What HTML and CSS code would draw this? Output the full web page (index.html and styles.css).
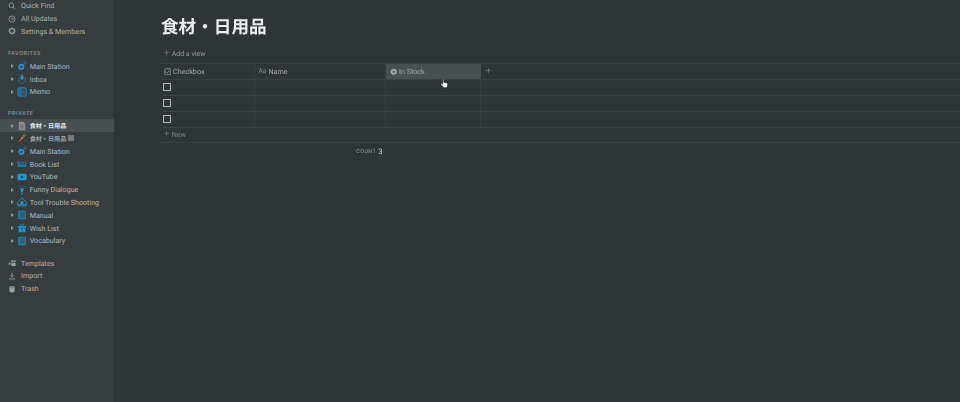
FILE: index.html
```html
<!DOCTYPE html>
<html lang="ja">
<head>
<meta charset="utf-8">
<title>食材・日用品</title>
<link rel="stylesheet" href="styles.css">
</head>
<body>
<div class="app">
  <aside class="sidebar">
    <nav class="group group-top">
      <div class="row tool"><svg class="ticon" viewBox="0 0 10 10"><circle cx="4.2" cy="4.2" r="2.9" class="ln"/><path d="M6.4 6.4 9 9" class="ln"/></svg><span>Quick Find</span></div>
      <div class="row tool"><svg class="ticon" viewBox="0 0 10 10"><circle cx="5" cy="5" r="3.9" class="ln"/><path d="M5 2.8V5.3H7.2" class="ln"/></svg><span>All Updates</span></div>
      <div class="row tool"><svg class="ticon" viewBox="0 0 10 10"><circle cx="5" cy="5" r="2.9" class="ln thick"/><path d="M5 .6v1.6M5 7.8v1.6M.6 5h1.6M7.8 5h1.6M1.9 1.9 3 3M7 7l1.1 1.1M8.1 1.9 7 3M3 7 1.9 8.1" class="ln thick"/></svg><span>Settings &amp; Members</span></div>
    </nav>
    <h2 class="heading">FAVORITES</h2>
    <nav class="group">
      <div class="row page"><i class="caret"></i><svg class="picon" viewBox="0 0 11 11"><circle cx="4.8" cy="6.4" r="3.4" fill="#2a8fc4"/><circle cx="4.8" cy="6.4" r="1.3" fill="#373c3f"/><circle cx="9" cy="2" r="1.3" fill="none" stroke="#2a8fc4" stroke-width=".7"/></svg><span>Main Station</span></div>
      <div class="row page"><i class="caret"></i><svg class="picon" viewBox="0 0 11 11"><circle cx="5.5" cy="6.5" r="3.7" fill="none" stroke="#2a8fc4" stroke-width="1.1" stroke-dasharray="1.3 .7"/><path d="M4.4 .8h2.2v3.2h1.5L5.5 6.8 2.9 4h1.5z" fill="#2a8fc4"/></svg><span>Inbox</span></div>
      <div class="row page"><i class="caret"></i><svg class="picon" viewBox="0 0 11 11"><rect x="1" y="1" width="9" height="9" rx="1" fill="none" stroke="#2a8fc4" stroke-width="1.1"/><rect x="1" y="1" width="5" height="9" fill="#1f6f99"/><path d="M7.6 3.5v4" stroke="#2a8fc4" stroke-width="1"/></svg><span>Memo</span></div>
    </nav>
    <h2 class="heading heading-private">PRIVATE</h2>
    <nav class="group">
      <div class="row page current"><i class="caret"></i><svg class="picon" viewBox="0 0 11 11"><path d="M2 .8h4.8L9 3v7.2H2z" fill="#8b8f91"/><path d="M3.5 4.5h4M3.5 6h4M3.5 7.5h4" stroke="#5a5f62" stroke-width=".6"/></svg><span class="cjk">食材・日用品</span></div>
      <div class="row page"><i class="caret"></i><svg class="picon" viewBox="0 0 11 11"><path d="M1 10.4 6 3.6 7.6 5.2z" fill="#e07b2a"/><path d="M6.6 3.6 8.6.6M7.2 4.2 10 2.4" stroke="#5fa33a" stroke-width="1.1"/></svg><span class="cjk">食材・日用品<b class="tag"></b></span></div>
      <div class="row page"><i class="caret"></i><svg class="picon" viewBox="0 0 11 11"><circle cx="4.8" cy="6.4" r="3.4" fill="#2a8fc4"/><circle cx="4.8" cy="6.4" r="1.3" fill="#373c3f"/><circle cx="9" cy="2" r="1.3" fill="none" stroke="#2a8fc4" stroke-width=".7"/></svg><span>Main Station</span></div>
      <div class="row page"><i class="caret"></i><svg class="picon" viewBox="0 0 11 11"><path d="M.6 2.4h9.8v6.2H.6z" fill="#1f7fb0"/><path d="M1.8 2.4h7.4v4H1.8z" fill="#373c3f"/><path d="M3 3v3M4.5 3v3M6 3v3M7.5 3v3" stroke="#2a8fc4" stroke-width=".6"/></svg><span>Book List</span></div>
      <div class="row page"><i class="caret"></i><svg class="picon" viewBox="0 0 11 11"><rect x=".4" y="1.8" width="10.2" height="7.4" rx="1.8" fill="#159bd8"/><path d="M4.5 3.9 7.2 5.5 4.5 7.1z" fill="#26292b"/></svg><span>YouTube</span></div>
      <div class="row page"><i class="caret"></i><svg class="picon" viewBox="0 0 11 11"><path d="M3.4 3.6h4.2L6.4 7.6H4.6z" fill="#2a8fc4"/><path d="M4.6 8.2h1.8v2H4.6z" fill="#2a8fc4"/><path d="M5.5.4v2M2 1.2l1.2 1.6M9 1.2 7.8 2.8" stroke="#2a8fc4" stroke-width=".6"/></svg><span>Funny Dialogue</span></div>
      <div class="row page"><i class="caret"></i><svg class="picon" viewBox="0 0 11 11"><path d="M5.5.8 10.2 6v3.8H.8V6z" fill="none" stroke="#2a8fc4" stroke-width="1"/><circle cx="5.5" cy="6.2" r="1.7" fill="#2a8fc4"/><path d="M1 8.5h9" stroke="#2a8fc4" stroke-width="1.2"/></svg><span>Tool Trouble Shooting</span></div>
      <div class="row page"><i class="caret"></i><svg class="picon" viewBox="0 0 11 11"><rect x="1.2" y=".8" width="8.6" height="9.4" rx=".6" fill="#1f7fb0"/><rect x="3" y="2" width="5.6" height="6.8" fill="#2f5f78"/></svg><span>Manual</span></div>
      <div class="row page"><i class="caret"></i><svg class="picon" viewBox="0 0 11 11"><path d="M1 3.2h9v2H1zM1.8 5.8h3.3v4.4H1.8zM5.9 5.8h3.3v4.4H5.9z" fill="#159bd8"/><path d="M5.5 3 3.2.8M5.5 3 7.8.8" stroke="#159bd8" stroke-width="1"/></svg><span>Wish List</span></div>
      <div class="row page"><i class="caret"></i><svg class="picon" viewBox="0 0 11 11"><rect x="1.2" y=".8" width="8.6" height="9.4" rx=".6" fill="#1f7fb0"/><rect x="3" y="2" width="5.6" height="6.8" fill="#2f5f78"/></svg><span>Vocabulary</span></div>
    </nav>
    <nav class="group group-bottom">
      <div class="row tool"><svg class="ticon" viewBox="0 0 10 10"><path d="M.8 5.4 3 3.8v3.4H.8zM4.2 1.6h2.4v2.6H4.2zM7.2 1.6h2.2v2.6H7.2zM4.2 5h5.2v3.6H4.2z" fill="#9b9ea0"/></svg><span>Templates</span></div>
      <div class="row tool"><svg class="ticon" viewBox="0 0 10 10"><path d="M5 1v5.4M2.9 4.4 5 6.5l2.1-2.1M1 8.7h8" class="ln"/></svg><span>Import</span></div>
      <div class="row tool"><svg class="ticon" viewBox="0 0 10 10"><path d="M1.5 2.5h7L7.8 8.8Q5 10 2.2 8.8z" fill="#a3a6a8"/><ellipse cx="5" cy="2.4" rx="3.4" ry="1.3" fill="#a3a6a8" stroke="#373c3f" stroke-width=".5"/></svg><span>Trash</span></div>
    </nav>
  </aside>
  <main class="main">
    <h1 class="title">食材・日用品</h1>
    <div class="views"><span class="plus">+</span><span>Add a view</span></div>
    <section class="table">
      <div class="tr thead">
        <div class="cell"><svg class="hicon" viewBox="0 0 10 10"><rect x="1" y="1" width="8" height="8" rx="1" class="ln"/><path d="M3 5 4.6 6.6 7.2 3.2" class="ln"/></svg><span>Checkbox</span></div>
        <div class="cell cell-name"><span class="aa">Aa</span><span>Name</span></div>
        <div class="cell cell-hover"><svg class="hicon" viewBox="0 0 10 10"><circle cx="5" cy="5" r="4" fill="#a6a9ab"/><circle cx="5" cy="5" r="1.5" fill="#4a4f52"/></svg><span>In Stock</span></div>
        <div class="cell cell-add">+</div>
      </div>
      <div class="tr body"><div class="cell"><i class="check"></i></div><div class="cell"></div><div class="cell"></div><div class="cell cell-end"></div></div>
      <div class="tr body"><div class="cell"><i class="check"></i></div><div class="cell"></div><div class="cell"></div><div class="cell cell-end"></div></div>
      <div class="tr body"><div class="cell"><i class="check"></i></div><div class="cell"></div><div class="cell"></div><div class="cell cell-end"></div></div>
      <div class="new"><span class="plus">+</span><span>New</span></div>
      <div class="tr foot"><div class="count"><span class="count-label">COUNT</span><span class="count-value">3</span></div></div>
    </section>
    <svg class="cursor" viewBox="0 0 9 11"><path d="M2.6 1.1c.6-.5 1.2 0 1.2.6v2.6l2.9.7c.9.3 1 .9.9 1.6l-.4 2.2c-.1.5-.4.9-1 .9H4.2c-.5 0-.8-.2-1.1-.6L1 6.4c-.4-.6.3-1.3 1-.8l.7.6V1.7z" fill="#fff" stroke="#111" stroke-width=".5"/></svg>
  </main>
</div>
</body>
</html>
```
FILE: styles.css
```css
* { box-sizing: border-box; }
html, body { margin: 0; height: 100%; overflow: hidden; background: #2f3437; }
body { font-family: Roboto, "Noto Sans CJK JP", sans-serif; font-size: 7.15px; color: #c3c5c6; text-rendering: geometricPrecision; }
.app { display: flex; height: 402px; width: 960px; overflow: hidden; filter: blur(.4px); }
.sidebar { flex: 0 0 114px; background: #373c3f; overflow: hidden; }
.group-top { margin-top: -.5px; }
.group-bottom { margin-top: 9.5px; }
.row { display: flex; align-items: center; height: 12.8px; white-space: nowrap; }
.tool { padding-left: 8px; gap: 5px; color: #b0b2b4; }
.page { padding-left: 10px; gap: 2.5px; }
.page span { color: #b8babb; }
.cjk { font-family: "Noto Sans CJK JP", sans-serif; font-size: 6.1px; font-weight: 500; }
.current { background: #4a4f52; }
.current span { color: #e6e7e7; font-weight: 700; }
.heading { margin: 9px 0 0; height: 13px; padding: 2px 0 0 8px; display: flex; align-items: center; font-size: 5.6px; font-weight: 500; letter-spacing: .5px; color: #8b8e90; }
.heading-private { margin-top: 8px; }
.ticon { width: 8px; height: 8px; flex: none; }
.picon { width: 10px; height: 10px; flex: none; }
.hicon { width: 7.5px; height: 7.5px; flex: none; }
.ln { fill: none; stroke: #a3a6a8; stroke-width: 1; }
.thick { stroke-width: 1.3; }
.caret { width: 0; height: 0; flex: none; margin-right: 1.2px; margin-left: .5px; border-left: 3.8px solid #94979a; border-top: 2.6px solid transparent; border-bottom: 2.6px solid transparent; }
.tag { display: inline-block; width: 6px; height: 6px; background: #777b7d; vertical-align: -0.5px; margin-left: 2px; }
.main { position: relative; flex: 1; min-width: 0; padding-left: 47px; overflow: hidden; }
.title { margin: 0; padding-top: 16px; height: 44px; font-size: 17.6px; line-height: 22px; font-weight: 700; color: #eceded; font-family: "Noto Sans CJK JP", sans-serif; white-space: nowrap; }
.views { display: flex; align-items: center; gap: 2px; height: 19px; padding-left: 3px; font-size: 7px; color: #95989a; }
.plus { font-size: 10px; font-weight: 300; line-height: 1; color: #85888a; }
.table { width: 799px; border-top: 1px solid #3b4043; }
.tr { display: grid; grid-template-columns: 93.5px 131px 95px 1fr; }
.thead { height: 15.5px; border-bottom: 1px solid #3b4043; }
.body { height: 16px; border-bottom: 1px solid #3b4043; }
.cell { display: flex; align-items: center; gap: 2px; padding-left: 2.5px; border-right: 1px solid #383d40; color: #a8abad; font-size: 7.2px; }
.cell-name { padding-left: 4px; gap: 2px; }
.cell-hover { background: #4a4f52; border-right: 0; padding-left: 4px; gap: 2px; }
.cell-add, .cell-end { border-right: 0; }
.cell-add { padding-left: 5px; font-size: 10px; font-weight: 300; color: #85888a; }
.aa { font-size: 6.6px; color: #85888a; }
.check { display: block; width: 8px; height: 8px; margin-left: -.5px; border: 1px solid #b4b6b8; }
.new { display: flex; align-items: center; gap: 2px; height: 15.5px; padding-left: 3px; border-bottom: 1px solid #3b4043; font-size: 7.2px; color: #7c8082; }
.foot { height: 17px; }
.count { grid-column: 1 / 3; display: flex; justify-content: flex-end; align-items: center; gap: 2px; padding-right: 3px; }
.count-label { font-size: 5.4px; letter-spacing: .45px; color: #a0a3a5; }
.count-value { font-size: 7.6px; color: #d6d7d8; }
.cursor { position: absolute; left: 326px; top: 78px; width: 9px; height: 11px; }
```
